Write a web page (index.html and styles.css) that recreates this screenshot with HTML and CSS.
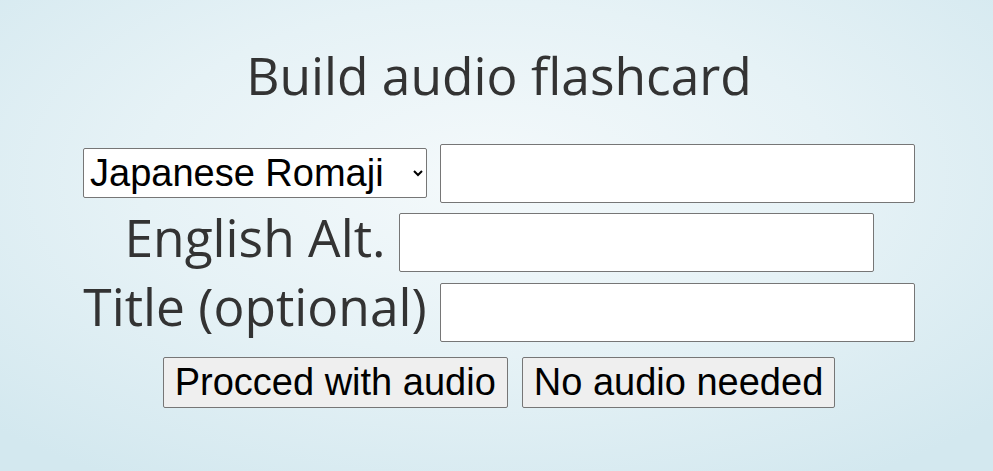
FILE: index.html
```html
<!DOCTYPE html>
<html lang="en">
<head>
<meta charset="utf-8">
<title>Build audio flashcard</title>
<link rel="stylesheet" href="styles.css">
</head>
<body>
<main class="page">
  <h1 class="title">Build audio flashcard</h1>
  <form class="form">
    <div class="row">
      <select class="lang">
        <option>Japanese Romaji</option>
      </select>
      <input class="field" type="text">
    </div>
    <div class="row">
      <label class="label">English Alt.</label>
      <input class="field" type="text">
    </div>
    <div class="row">
      <label class="label">Title (optional)</label>
      <input class="field" type="text">
    </div>
    <div class="row buttons">
      <button type="button" class="btn">Procced with audio</button>
      <button type="button" class="btn">No audio needed</button>
    </div>
  </form>
</main>
</body>
</html>
```

FILE: styles.css
```css
html, body {
  margin: 0;
  height: 100%;
}
body {
  background: radial-gradient(ellipse 70% 75% at 49% 38%, #f4f9fb 0%, #e6f2f6 50%, #d3e8ef 100%);
  font-family: "Open Sans", sans-serif;
  color: #333;
}
.page {
  padding: 41px 0 0 5px;
  display: flex;
  flex-direction: column;
  align-items: center;
}
.title {
  margin: 0;
  font-weight: 400;
  font-size: 51.5px;
  line-height: 69.5px;
}
.form {
  margin-top: 28px;
  display: flex;
  flex-direction: column;
  align-items: center;
}
.row {
  height: 69.5px;
  display: flex;
  align-items: center;
  gap: 13px;
}
.label {
  font-size: 51.5px;
  line-height: 69.5px;
  padding-bottom: 11px;
}
.field {
  box-sizing: border-box;
  width: 475px;
  height: 59px;
  margin: 0;
  border: 1px solid #767676;
  border-radius: 2px;
  background: #fff;
  font-family: Arial, "Liberation Sans", sans-serif;
  font-size: 38px;
}
.lang {
  box-sizing: border-box;
  width: 344px;
  height: 50px;
  margin: 0;
  padding: 0 2px;
  border: 1px solid #767676;
  border-radius: 2px;
  background: #fff;
  color: #000;
  font-family: Arial, "Liberation Sans", sans-serif;
  font-size: 38px;
}
.buttons {
  height: 70px;
  gap: 14px;
}
.btn {
  box-sizing: border-box;
  height: 51px;
  margin: 0;
  padding: 0 11px;
  border: 1px solid #767676;
  border-radius: 2px;
  background: #efefef;
  color: #000;
  font-family: Arial, "Liberation Sans", sans-serif;
  font-size: 38px;
}
```
